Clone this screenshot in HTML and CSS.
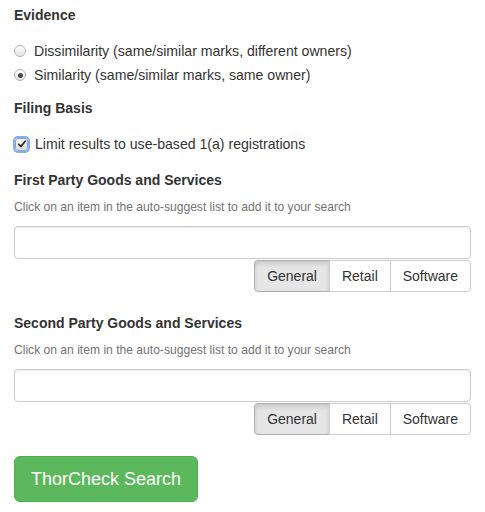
FILE: index.html
```html
<!DOCTYPE html>
<html>
<head>
<meta charset="utf-8">
<link rel="stylesheet" href="styles.css">
</head>
<body>
<form class="form">
  <div class="label first">Evidence</div>
  <label class="choice radio-1"><span class="radio"></span><span>Dissimilarity (same/similar marks, different owners)</span></label>
  <label class="choice radio-2"><span class="radio on"></span><span>Similarity (same/similar marks, same owner)</span></label>

  <div class="label filing">Filing Basis</div>
  <label class="choice check-row"><span class="check"><svg viewBox="0 0 12 12" width="10" height="10"><path d="M2.2 6.4 L4.8 9 L9.8 2.6" fill="none" stroke="#222" stroke-width="2" stroke-linecap="round" stroke-linejoin="round"/></svg></span><span>Limit results to use-based 1(a) registrations</span></label>

  <section class="party">
    <div class="label">First Party Goods and Services</div>
    <div class="help">Click on an item in the auto-suggest list to add it to your search</div>
    <div class="input"></div>
    <div class="btn-row">
      <div class="btn-group">
        <span class="seg active">General</span><span class="seg">Retail</span><span class="seg">Software</span>
      </div>
    </div>
  </section>

  <section class="party second">
    <div class="label">Second Party Goods and Services</div>
    <div class="help">Click on an item in the auto-suggest list to add it to your search</div>
    <div class="input"></div>
    <div class="btn-row">
      <div class="btn-group">
        <span class="seg active">General</span><span class="seg">Retail</span><span class="seg">Software</span>
      </div>
    </div>
  </section>

  <div class="submit-row"><span class="btn-success">ThorCheck Search</span></div>
</form>
</body>
</html>
```
FILE: styles.css
```css
* { box-sizing: border-box; }
html, body { margin: 0; padding: 0; background: #fff; }
body {
  font-family: "Liberation Sans", Arial, Helvetica, sans-serif;
  color: #333;
  font-size: 14px;
}
.form {
  padding: 5px 14px 0 14px;
  width: 485px;
}
.label {
  font-weight: bold;
  font-size: 14px;
  line-height: 20px;
  height: 20px;
}
.choice {
  display: flex;
  align-items: center;
  font-size: 14.1px;
  line-height: 20px;
  height: 20px;
}
.radio-1 { margin-top: 16px; }
.radio-2 { margin-top: 4px; }
.filing { margin-top: 13px; }
.check-row { margin-top: 16px; }

.radio {
  width: 12px;
  height: 12px;
  border-radius: 50%;
  border: 1px solid #b5b5b5;
  background: linear-gradient(#fdfdfd, #e6e6e6);
  margin-right: 8px;
  flex: none;
  display: flex;
  align-items: center;
  justify-content: center;
}
.radio.on::after {
  content: "";
  width: 5px;
  height: 5px;
  border-radius: 50%;
  background: #4a4a4a;
}
.check {
  width: 13px;
  height: 13px;
  border-radius: 3px;
  border: 1px solid #8fa6c8;
  background: linear-gradient(#f6f6f6, #dcdcdc);
  box-shadow: 0 0 0 2px #7fb0ec;
  margin-left: 1px;
  margin-right: 7px;
  flex: none;
  display: flex;
  align-items: center;
  justify-content: center;
}
.party { margin-top: 16px; }
.party.second { margin-top: 21px; }
.help {
  margin-top: 8px;
  font-size: 12.1px;
  line-height: 18px;
  height: 18px;
  color: #737373;
}
.input {
  margin-top: 10px;
  height: 33px;
  border: 1px solid #ccc;
  border-radius: 4px;
  box-shadow: inset 0 1px 1px rgba(0,0,0,0.075);
  background: #fff;
}
.btn-row {
  display: flex;
  justify-content: flex-end;
  margin-top: 1px;
}
.btn-group {
  display: flex;
  height: 32px;
}
.seg {
  display: flex;
  align-items: center;
  padding: 0 12px;
  border: 1px solid #ccc;
  background: #fff;
  color: #333;
  font-size: 14px;
  margin-left: -1px;
}
.seg:first-child {
  margin-left: 0;
  border-radius: 4px 0 0 4px;
}
.seg:last-child { border-radius: 0 4px 4px 0; }
.seg.active {
  background: #e6e6e6;
  border-color: #adadad;
  box-shadow: inset 0 3px 5px rgba(0,0,0,0.125);
}
.submit-row {
  margin-top: 21px;
  display: flex;
}
.btn-success {
  display: inline-flex;
  align-items: center;
  height: 46px;
  padding: 0 16px;
  background: #5cb85c;
  border: 1px solid #4cae4c;
  border-radius: 6px;
  color: #fff;
  font-size: 18px;
}
```
